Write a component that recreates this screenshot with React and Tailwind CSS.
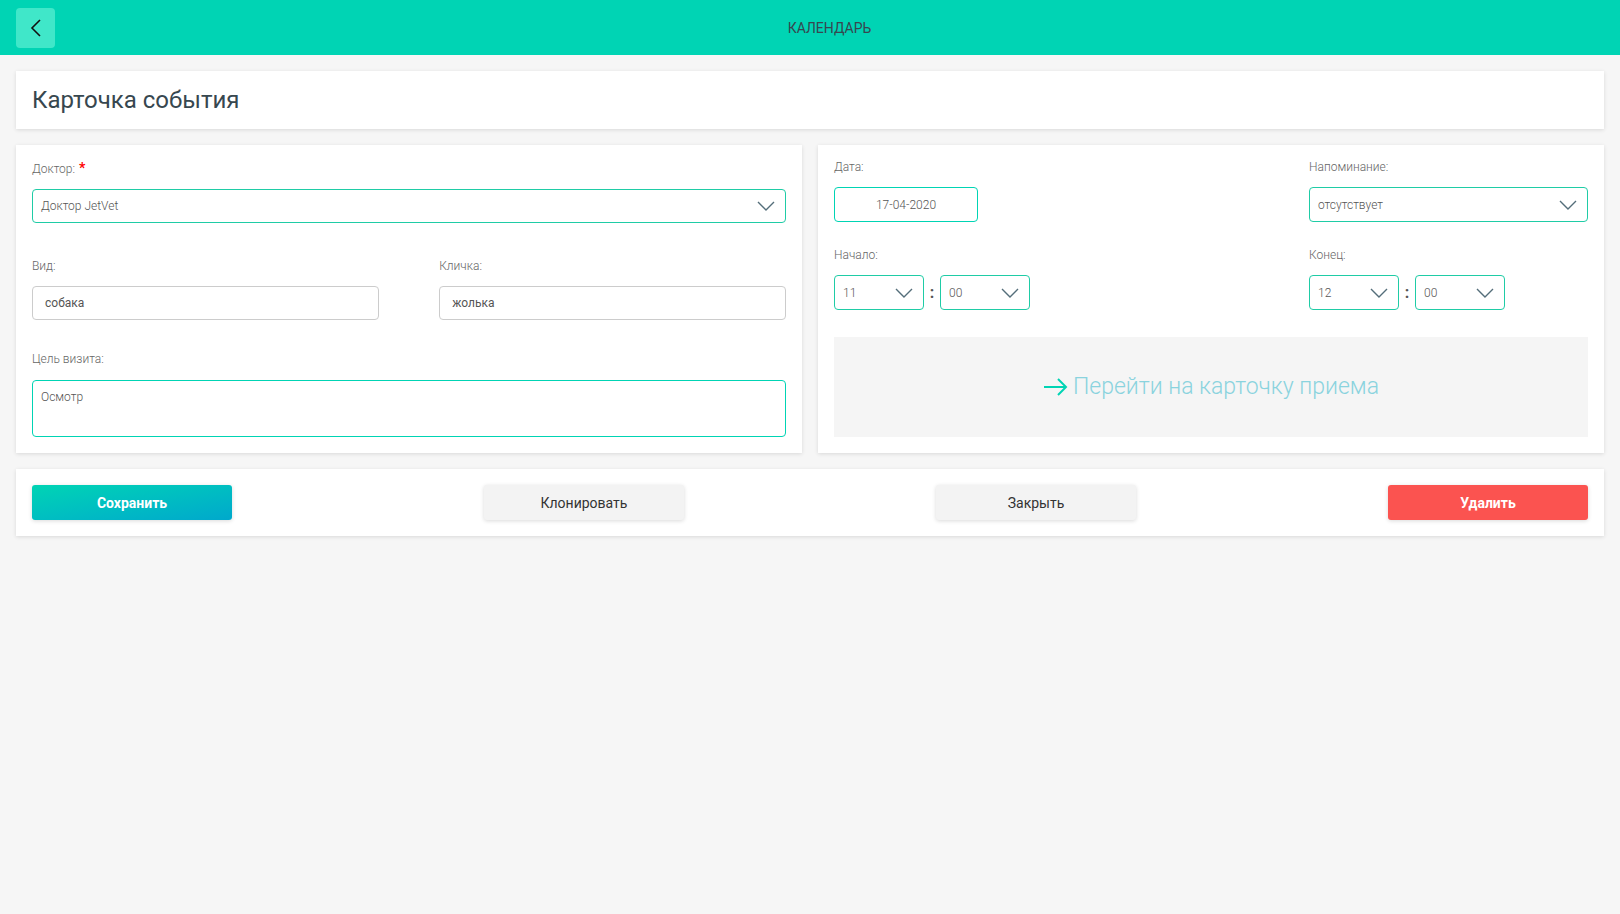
import React from "react";

const Chevron = () => (
  <svg width="18" height="10" viewBox="0 0 18 10" fill="none" className="shrink-0">
    <path d="M1 1l8 8 8-8" stroke="#546e7a" strokeWidth="1.4" />
  </svg>
);

const Label = ({ children, required }) => (
  <div className="h-4 text-xs leading-4 text-[#666] font-light mb-3">
    {children}
    {required && <span className="text-[#f00] font-bold text-sm leading-none ml-1">*</span>}
  </div>
);

const SelectBox = ({ value, className = "" }) => (
  <div
    className={`h-[35px] border border-[#1fcca6] rounded flex items-center justify-between pl-2 pr-2.5 text-xs font-light text-[#555] ${className}`}
  >
    <span>{value}</span>
    <Chevron />
  </div>
);

const TimePicker = ({ hour, minute }) => (
  <div className="flex items-center">
    <SelectBox value={hour} className="w-[90px]" />
    <span className="w-4 text-center text-base font-bold text-[#555]">:</span>
    <SelectBox value={minute} className="w-[90px]" />
  </div>
);

const App = () => {
  return (
    <div className="min-h-screen bg-[#f6f6f6] font-['Roboto',sans-serif] pb-8">
      {/* Header */}
      <div className="h-[55px] bg-[#00d4b4] flex items-center px-4">
        <button className="w-[39px] h-[40px] rounded-sm bg-[#40e7c9] flex items-center justify-center">
          <svg width="14" height="20" viewBox="0 0 14 20" fill="none">
            <path d="M11 2L3 10l8 8" stroke="#111" strokeWidth="1.6" />
          </svg>
        </button>
        <div className="flex-1 text-center text-sm text-[#37474f] uppercase">Календарь</div>
      </div>

      <div className="px-4 pt-4 flex flex-col gap-4">
        {/* Title */}
        <div className="bg-white h-[58px] flex items-center px-4 shadow-[0_1px_4px_rgba(0,0,0,0.12)]">
          <h1 className="text-2xl text-[#37474f]">Карточка события</h1>
        </div>

        <div className="flex gap-4">
          {/* Left card */}
          <div className="flex-1 bg-white px-4 pt-4 pb-4 shadow-[0_1px_4px_rgba(0,0,0,0.12)]">
            <Label required>Доктор:</Label>
            <div className="h-[34px] border border-[#1fcca6] rounded flex items-center justify-between pl-2 pr-2.5 text-xs font-light text-[#555]">
              <span>Доктор JetVet</span>
              <Chevron />
            </div>

            <div className="flex justify-between mt-[35px]">
              <div className="w-[46%]">
                <Label>Вид:</Label>
                <div className="h-[34px] border border-[#ccc] rounded flex items-center px-3 text-xs text-[#555]">
                  собака
                </div>
              </div>
              <div className="w-[46%]">
                <Label>Кличка:</Label>
                <div className="h-[34px] border border-[#ccc] rounded flex items-center px-3 text-xs text-[#555]">
                  жолька
                </div>
              </div>
            </div>

            <div className="mt-[31px]">
              <div className="text-xs leading-4 text-[#666] font-light mb-[13px]">Цель визита:</div>
              <div className="h-[57px] border border-[#00d4b4] rounded px-2 pt-2 text-xs font-light text-[#555]">
                Осмотр
              </div>
            </div>
          </div>

          {/* Right card */}
          <div className="flex-1 bg-white px-4 pt-[14px] pb-4 shadow-[0_1px_4px_rgba(0,0,0,0.12)]">
            <div className="flex justify-between">
              <div>
                <Label>Дата:</Label>
                <div className="w-[144px] h-[35px] border border-[#00d4b4] rounded flex items-center justify-center text-xs font-light text-[#555]">
                  17-04-2020
                </div>
                <div className="mt-[25px]">
                  <Label>Начало:</Label>
                  <TimePicker hour="11" minute="00" />
                </div>
              </div>
              <div className="w-[279px]">
                <Label>Напоминание:</Label>
                <SelectBox value="отсутствует" />
                <div className="mt-[25px]">
                  <Label>Конец:</Label>
                  <TimePicker hour="12" minute="00" />
                </div>
              </div>
            </div>

            <div className="mt-[27px] h-[100px] bg-[#f5f5f5] flex items-center justify-center gap-1">
              <svg width="26" height="20" viewBox="0 0 26 20" fill="none">
                <path d="M1 10h22M15 2l8 8-8 8" stroke="#00d4b4" strokeWidth="2" />
              </svg>
              <span className="text-[23px] font-light text-[#8ad3de]">Перейти на карточку приема</span>
            </div>
          </div>
        </div>

        {/* Actions */}
        <div className="bg-white h-[67px] px-4 flex items-center justify-between shadow-[0_1px_4px_rgba(0,0,0,0.12)]">
          <button className="w-[200px] h-[35px] rounded-[3px] bg-gradient-to-br from-[#00d4b4] to-[#00a8cc] text-white text-sm font-bold shadow-[0_1px_4px_rgba(0,0,0,0.15)]">
            Сохранить
          </button>
          <button className="w-[200px] h-[35px] rounded-[3px] bg-[#f3f3f3] text-[#333] text-sm shadow-[0_1px_4px_rgba(0,0,0,0.15)]">
            Клонировать
          </button>
          <button className="w-[200px] h-[35px] rounded-[3px] bg-[#f3f3f3] text-[#333] text-sm shadow-[0_1px_4px_rgba(0,0,0,0.15)]">
            Закрыть
          </button>
          <button className="w-[200px] h-[35px] rounded-[3px] bg-[#fb5350] text-white text-sm font-bold shadow-[0_1px_4px_rgba(0,0,0,0.15)]">
            Удалить
          </button>
        </div>
      </div>
    </div>
  );
};

export default App;
